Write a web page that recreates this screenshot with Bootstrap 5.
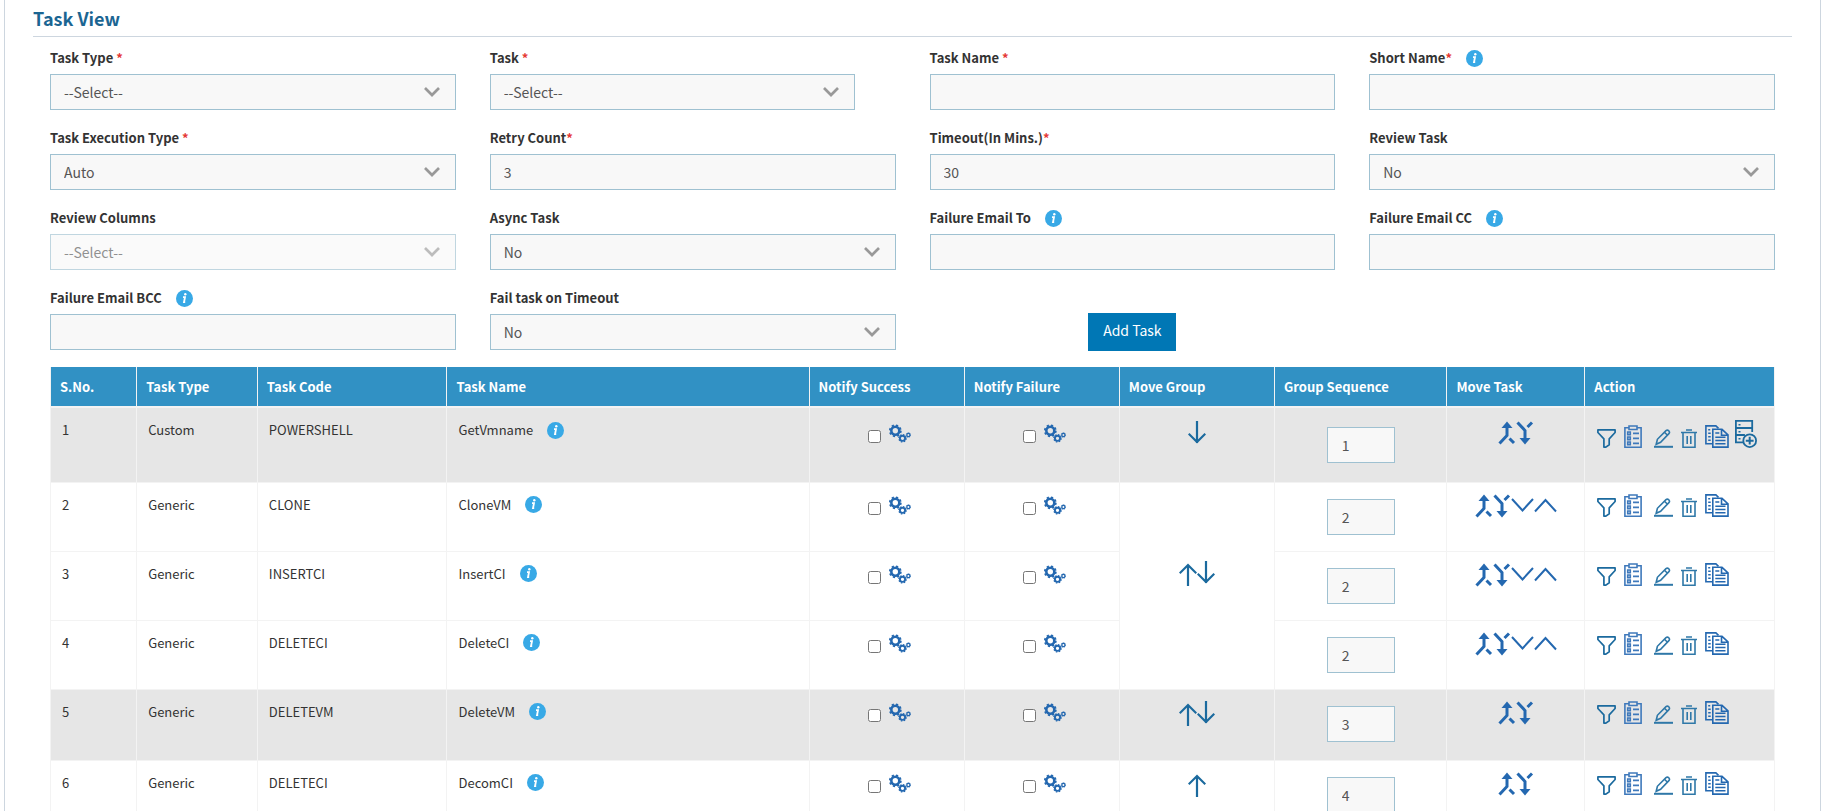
<!DOCTYPE html>
<html lang="en">
<head>
<meta charset="utf-8">
<meta name="viewport" content="width=device-width, initial-scale=1">
<title>Task View</title>
<link href="https://cdn.jsdelivr.net/npm/bootstrap@5.3.0/dist/css/bootstrap.min.css" rel="stylesheet">
<style>
  body { font-family: "Noto Sans CJK SC", "Open Sans", sans-serif; font-size: 13px; line-height: 20px; color: #333; background: #fff; }
  .panel { margin: 0 3px 0 4px; padding: 0 28px; border: solid #cdd6df; border-width: 0 1px; }
  .panel-title { font-size: 18px; line-height: 36px; font-weight: 700; color: #1b6592; border-bottom: 1px solid #cdd6df; }
  .task-form { padding-top: 11px; row-gap: 18px; }
  .field { padding: 0 17px; }
  .field-label { display: flex; align-items: center; height: 20px; margin-bottom: 6px; font-weight: 700; white-space: pre; }
  .req { color: #e53935; }
  .field .form-control, .field .form-select, .seq-input { height: 36px; padding: 0 13px; font-size: 14px; line-height: 34px; color: #555; background-color: #f8f8f8; border: 1px solid #9fc1d1; border-radius: 0; }
  .field .form-select { background-image: url("data:image/svg+xml,%3Csvg xmlns='http://www.w3.org/2000/svg' viewBox='0 0 16 10'%3E%3Cpath fill='none' stroke='%23999' stroke-width='2.700' d='M1 1l7 7 7-7'/%3E%3C/svg%3E"); background-size: 16px 10px; background-position: right 15px center; }
  .field .form-select:disabled { opacity: .65; }
  .short-select { width: 90%; }
  .btn-add { width: 88px; height: 38px; margin-top: 25px; padding: 0 0 3px; font-size: 14px; color: #fff; background: #0077b5; border-radius: 0; }
  .btn-add:hover { color: #fff; background: #00669c; }
  .info-dot { width: 17px; height: 17px; margin-left: 14px; flex: none; }
  .table-wrap { padding: 0 17px; margin-top: 16px; }
  .task-table { table-layout: fixed; width: 100%; margin: 0; border-left: 1px solid #f3f3f3; color: #333; }
  .task-table th { height: 40px; padding: 8px 9px; font-size: 13px; font-weight: 700; color: #fff; background: #3191c4; border: solid #f3f3f3; border-width: 0 1px 2px 0; vertical-align: middle; }
  .task-table td { height: 69px; padding: 12px 11px 0; background: #fff; border: solid #f3f3f3; border-width: 0 1px 1px 0; vertical-align: top; }
  .task-table .shaded td { background: #e6e6e6; }
  .task-table .first td { height: 75px; }
  .task-table .last-group td { height: 71px; }
  .task-table .notify { padding: 13px 0 0 58px; }
  .task-table .seq { padding: 16px 0 0; text-align: center; }
  .task-table .moves { padding: 11px 0 0; text-align: center; }
  .task-table .group-span { padding: 0 0 24px; vertical-align: middle; }
  .task-table .acts { padding: 6px 0 0 12px; }
  .task-table .first .notify { padding-top: 16px; }
  .task-table .first .seq { padding-top: 19px; }
  .task-table .first .moves { padding-top: 13px; }
  .task-table .first .acts { padding-top: 12px; }
  .seq-input { width: 68px; padding: 0 14px; }
  .notify input { width: 13px; height: 13px; margin: 6px 8px 0 0; }
  .ib { display: inline-flex; padding: 0; border: 0; background: none; }
  .acts > div { align-items: flex-end; height: 28px; gap: 8px; }
  .acts .server { margin-left: -2px; }
  .acts .pencil { margin-left: 4px; }
</style>
</head>
<body class="vh-100 overflow-hidden">
<svg class="d-none" aria-hidden="true">
  <symbol id="info" viewBox="0 0 17 17"><circle cx="8.500" cy="8.500" r="8.500" fill="#38a9e6"/><path d="M7 7.200h2l-1 5h1.200" fill="none" stroke="#fff" stroke-width="1.800"/><circle cx="9.300" cy="4.300" r="1.200" fill="#fff"/></symbol>
  <symbol id="gears" viewBox="0 0 22 19"><g fill="none" stroke="#2468b0">
    <circle cx="6.300" cy="6.800" r="4" stroke-width="2.600"/><circle cx="6.300" cy="6.800" r="5.500" stroke-width="1.800" stroke-dasharray="2.200 2.120"/>
    <circle cx="13.500" cy="14.300" r="2.600" stroke-width="1.900"/><circle cx="13.500" cy="14.300" r="3.700" stroke-width="1.200" stroke-dasharray="1.500 1.406"/>
    <circle cx="19.400" cy="11" r="1.600" stroke-width="1.300"/><circle cx="19.400" cy="11" r="2.300" stroke-width=".8" stroke-dasharray="1 .806"/></g></symbol>
  <symbol id="down" viewBox="0 0 18 25"><path d="M9 0v22M.7 12.700L9 21l8.300-8.300" fill="none" stroke="#1b6a9e" stroke-width="2.200"/></symbol>
  <symbol id="up" viewBox="0 0 18 25"><path d="M9 25V4M.7 12.300L9 4l8.300 8.300" fill="none" stroke="#1b6a9e" stroke-width="2.200"/></symbol>
  <symbol id="join" viewBox="0 0 18 24"><g fill="none" stroke="#2468b0" stroke-width="3"><path d="M9 5v9.500l-7.500 8M11.500 17.500l4.500 4.500"/></g><path d="M9 .5l5.500 6.500h-11z" fill="#2468b0"/></symbol>
  <symbol id="split" viewBox="0 0 18 24"><g fill="none" stroke="#2468b0" stroke-width="3"><path d="M9 19V9.500L1.500 1.500M11.500 6l4.500-4.500"/></g><path d="M9 23.500l5.500-6.500h-11z" fill="#2468b0"/></symbol>
  <symbol id="chev-d" viewBox="0 0 23 24"><path d="M1 5l10.500 11.500L22 5" fill="none" stroke="#2468b0" stroke-width="2"/></symbol>
  <symbol id="chev-u" viewBox="0 0 23 24"><path d="M1 17.500L11.500 6 22 17.500" fill="none" stroke="#2468b0" stroke-width="2"/></symbol>
  <symbol id="funnel" viewBox="0 0 19 19"><path d="M.9.9h17.200v2.600l-5.900 6.300v6L8.900 18.100h-2V9.800L.9 3.500z" fill="none" stroke="#1b6a9e" stroke-width="1.700" stroke-linejoin="round"/></symbol>
  <symbol id="clip" viewBox="0 0 18 23"><g fill="none" stroke="#3f79bb" stroke-width="1.600"><path d="M5 2.700H.9v19.500h16.200V2.700H13M5 1h8v3.500H5zM3.700 7h2.600v2.600H3.700zM3.700 12h2.600v2.600H3.700zM3.700 17h2.600v2.600H3.700z"/><path d="M9 8.300h6M9 13.300h6M9 18.300h6" stroke-width="1.800"/></g></symbol>
  <symbol id="pencil" viewBox="0 0 19 19"><g fill="none" stroke="#2f78a8" stroke-width="1.600"><path d="M2.200 15.300l1.200-5L12 1.700q1.300-1.200 2.600 0l.3.300q1.200 1.300 0 2.600l-8.300 8.700zM10.500 3.200l3 3"/><path d="M0 17.800h19" stroke-width="2"/></g></symbol>
  <symbol id="trash" viewBox="0 0 16 19"><g fill="none" stroke="#2f78a8" stroke-width="1.600"><path d="M0 3.500h16M5 1h6M2 3.500v14.700h12V3.500M6.200 7v8M9.800 7v8"/></g></symbol>
  <symbol id="copy" viewBox="0 0 24 23"><g fill="none" stroke="#2468b0" stroke-width="1.600"><path d="M7 18.700H.9V.9h10l2.600 2.400M3.200 4.800h2M3.200 8.300h2.500M3.200 11.800h2.500M3.200 15.300h2.500"/><path d="M7.800 4.300h9.200l6 5.500v12.300H7.800zM16.500 4.300v6H23M10.300 8h4M10.300 12.300h10.200M10.300 15.500h10.200M10.300 18.700h10.200"/></g></symbol>
  <symbol id="server" viewBox="0 0 22 28"><g fill="none" stroke="#1b6a9e" stroke-width="1.800"><path d="M17.200 12V.9H.9v21.400H8M.9 8h16.300M.9 15h9"/><circle cx="14.700" cy="20.700" r="6.400"/><path d="M14.700 16.800v7.800M10.800 20.700h7.800" stroke-width="2"/></g><path d="M3.500 4h2v1.400h-2zM3.500 11h2v1.400h-2zM3.500 18h2v1.400h-2z" fill="#1b6a9e"/></symbol>
</svg>

<main class="panel">
  <h1 class="panel-title mb-0">Task View</h1>

  <form class="task-form row gx-0">
    <div class="field col-3"><label class="field-label" for="taskType">Task Type <span class="req">*</span></label>
      <select class="form-select" id="taskType"><option>--Select--</option></select></div>
    <div class="field col-3"><label class="field-label" for="task">Task <span class="req">*</span></label>
      <select class="form-select short-select" id="task"><option>--Select--</option></select></div>
    <div class="field col-3"><label class="field-label" for="taskName">Task Name <span class="req">*</span></label>
      <input class="form-control" id="taskName" type="text"></div>
    <div class="field col-3"><label class="field-label" for="shortName">Short Name<span class="req">*</span><svg class="info-dot"><use href="#info"/></svg></label>
      <input class="form-control" id="shortName" type="text"></div>

    <div class="field col-3"><label class="field-label" for="execType">Task Execution Type <span class="req">*</span></label>
      <select class="form-select" id="execType"><option>Auto</option></select></div>
    <div class="field col-3"><label class="field-label" for="retry">Retry Count<span class="req">*</span></label>
      <input class="form-control" id="retry" type="text" value="3"></div>
    <div class="field col-3"><label class="field-label" for="timeout">Timeout(In Mins.)<span class="req">*</span></label>
      <input class="form-control" id="timeout" type="text" value="30"></div>
    <div class="field col-3"><label class="field-label" for="review">Review Task</label>
      <select class="form-select" id="review"><option>No</option></select></div>

    <div class="field col-3"><label class="field-label" for="reviewCols">Review Columns</label>
      <select class="form-select" id="reviewCols" disabled><option>--Select--</option></select></div>
    <div class="field col-3"><label class="field-label" for="async">Async Task</label>
      <select class="form-select" id="async"><option>No</option></select></div>
    <div class="field col-3"><label class="field-label" for="mailTo">Failure Email To<svg class="info-dot"><use href="#info"/></svg></label>
      <input class="form-control" id="mailTo" type="text"></div>
    <div class="field col-3"><label class="field-label" for="mailCc">Failure Email CC<svg class="info-dot"><use href="#info"/></svg></label>
      <input class="form-control" id="mailCc" type="text"></div>

    <div class="field col-3"><label class="field-label" for="mailBcc">Failure Email BCC<svg class="info-dot"><use href="#info"/></svg></label>
      <input class="form-control" id="mailBcc" type="text"></div>
    <div class="field col-3"><label class="field-label" for="failOn">Fail task on Timeout</label>
      <select class="form-select" id="failOn"><option>No</option></select></div>
    <div class="field col-3 text-center"><button class="btn btn-add" type="button">Add Task</button></div>
  </form>

  <div class="table-wrap">
    <table class="table task-table">
      <colgroup><col style="width:5%"><col style="width:7%"><col style="width:11%"><col style="width:21%"><col style="width:9%"><col style="width:9%"><col style="width:9%"><col style="width:10%"><col style="width:8%"><col style="width:11%"></colgroup>
      <thead><tr><th>S.No.</th><th>Task Type</th><th>Task Code</th><th>Task Name</th><th>Notify Success</th><th>Notify Failure</th><th>Move Group</th><th>Group Sequence</th><th>Move Task</th><th>Action</th></tr></thead>
      <tbody>
        <tr class="shaded first">
          <td>1</td><td>Custom</td><td>POWERSHELL</td>
          <td><div class="d-flex align-items-center">GetVmname<svg class="info-dot"><use href="#info"/></svg></div></td>
          <td class="notify"><div class="d-flex"><input type="checkbox" aria-label="Notify success 1"><button class="ib" aria-label="Success settings"><svg width="22" height="19"><use href="#gears"/></svg></button></div></td>
          <td class="notify"><div class="d-flex"><input type="checkbox" aria-label="Notify failure 1"><button class="ib" aria-label="Failure settings"><svg width="22" height="19"><use href="#gears"/></svg></button></div></td>
          <td class="moves"><div class="d-flex justify-content-center"><button class="ib" aria-label="Move group down"><svg width="18" height="25"><use href="#down"/></svg></button></div></td>
          <td class="seq"><input class="seq-input" type="text" value="1" aria-label="Group sequence 1"></td>
          <td class="moves"><div class="d-flex justify-content-center"><button class="ib" aria-label="Join above"><svg width="18" height="24"><use href="#join"/></svg></button><button class="ib" aria-label="Split below"><svg width="18" height="24"><use href="#split"/></svg></button></div></td>
          <td class="acts"><div class="d-flex"><button class="ib" aria-label="Filter"><svg width="19" height="19"><use href="#funnel"/></svg></button><button class="ib" aria-label="Checklist"><svg width="18" height="23"><use href="#clip"/></svg></button><button class="ib pencil" aria-label="Edit"><svg width="19" height="19"><use href="#pencil"/></svg></button><button class="ib" aria-label="Delete"><svg width="16" height="19"><use href="#trash"/></svg></button><button class="ib" aria-label="Copy"><svg width="24" height="23"><use href="#copy"/></svg></button><button class="ib server" aria-label="Add server"><svg width="22" height="28"><use href="#server"/></svg></button></div></td>
        </tr>
        <tr>
          <td>2</td><td>Generic</td><td>CLONE</td>
          <td><div class="d-flex align-items-center">CloneVM<svg class="info-dot"><use href="#info"/></svg></div></td>
          <td class="notify"><div class="d-flex"><input type="checkbox" aria-label="Notify success 2"><button class="ib" aria-label="Success settings"><svg width="22" height="19"><use href="#gears"/></svg></button></div></td>
          <td class="notify"><div class="d-flex"><input type="checkbox" aria-label="Notify failure 2"><button class="ib" aria-label="Failure settings"><svg width="22" height="19"><use href="#gears"/></svg></button></div></td>
          <td class="group-span" rowspan="3"><div class="d-flex justify-content-center"><button class="ib" aria-label="Move group up"><svg width="18" height="25"><use href="#up"/></svg></button><button class="ib" aria-label="Move group down"><svg width="18" height="25"><use href="#down"/></svg></button></div></td>
          <td class="seq"><input class="seq-input" type="text" value="2" aria-label="Group sequence 2"></td>
          <td class="moves"><div class="d-flex justify-content-center"><button class="ib" aria-label="Join above"><svg width="18" height="24"><use href="#join"/></svg></button><button class="ib" aria-label="Split below"><svg width="18" height="24"><use href="#split"/></svg></button><button class="ib" aria-label="Move down"><svg width="23" height="24"><use href="#chev-d"/></svg></button><button class="ib" aria-label="Move up"><svg width="23" height="24"><use href="#chev-u"/></svg></button></div></td>
          <td class="acts"><div class="d-flex"><button class="ib" aria-label="Filter"><svg width="19" height="19"><use href="#funnel"/></svg></button><button class="ib" aria-label="Checklist"><svg width="18" height="23"><use href="#clip"/></svg></button><button class="ib pencil" aria-label="Edit"><svg width="19" height="19"><use href="#pencil"/></svg></button><button class="ib" aria-label="Delete"><svg width="16" height="19"><use href="#trash"/></svg></button><button class="ib" aria-label="Copy"><svg width="24" height="23"><use href="#copy"/></svg></button></div></td>
        </tr>
        <tr>
          <td>3</td><td>Generic</td><td>INSERTCI</td>
          <td><div class="d-flex align-items-center">InsertCI<svg class="info-dot"><use href="#info"/></svg></div></td>
          <td class="notify"><div class="d-flex"><input type="checkbox" aria-label="Notify success 3"><button class="ib" aria-label="Success settings"><svg width="22" height="19"><use href="#gears"/></svg></button></div></td>
          <td class="notify"><div class="d-flex"><input type="checkbox" aria-label="Notify failure 3"><button class="ib" aria-label="Failure settings"><svg width="22" height="19"><use href="#gears"/></svg></button></div></td>
          <td class="seq"><input class="seq-input" type="text" value="2" aria-label="Group sequence 3"></td>
          <td class="moves"><div class="d-flex justify-content-center"><button class="ib" aria-label="Join above"><svg width="18" height="24"><use href="#join"/></svg></button><button class="ib" aria-label="Split below"><svg width="18" height="24"><use href="#split"/></svg></button><button class="ib" aria-label="Move down"><svg width="23" height="24"><use href="#chev-d"/></svg></button><button class="ib" aria-label="Move up"><svg width="23" height="24"><use href="#chev-u"/></svg></button></div></td>
          <td class="acts"><div class="d-flex"><button class="ib" aria-label="Filter"><svg width="19" height="19"><use href="#funnel"/></svg></button><button class="ib" aria-label="Checklist"><svg width="18" height="23"><use href="#clip"/></svg></button><button class="ib pencil" aria-label="Edit"><svg width="19" height="19"><use href="#pencil"/></svg></button><button class="ib" aria-label="Delete"><svg width="16" height="19"><use href="#trash"/></svg></button><button class="ib" aria-label="Copy"><svg width="24" height="23"><use href="#copy"/></svg></button></div></td>
        </tr>
        <tr>
          <td>4</td><td>Generic</td><td>DELETECI</td>
          <td><div class="d-flex align-items-center">DeleteCI<svg class="info-dot"><use href="#info"/></svg></div></td>
          <td class="notify"><div class="d-flex"><input type="checkbox" aria-label="Notify success 4"><button class="ib" aria-label="Success settings"><svg width="22" height="19"><use href="#gears"/></svg></button></div></td>
          <td class="notify"><div class="d-flex"><input type="checkbox" aria-label="Notify failure 4"><button class="ib" aria-label="Failure settings"><svg width="22" height="19"><use href="#gears"/></svg></button></div></td>
          <td class="seq"><input class="seq-input" type="text" value="2" aria-label="Group sequence 4"></td>
          <td class="moves"><div class="d-flex justify-content-center"><button class="ib" aria-label="Join above"><svg width="18" height="24"><use href="#join"/></svg></button><button class="ib" aria-label="Split below"><svg width="18" height="24"><use href="#split"/></svg></button><button class="ib" aria-label="Move down"><svg width="23" height="24"><use href="#chev-d"/></svg></button><button class="ib" aria-label="Move up"><svg width="23" height="24"><use href="#chev-u"/></svg></button></div></td>
          <td class="acts"><div class="d-flex"><button class="ib" aria-label="Filter"><svg width="19" height="19"><use href="#funnel"/></svg></button><button class="ib" aria-label="Checklist"><svg width="18" height="23"><use href="#clip"/></svg></button><button class="ib pencil" aria-label="Edit"><svg width="19" height="19"><use href="#pencil"/></svg></button><button class="ib" aria-label="Delete"><svg width="16" height="19"><use href="#trash"/></svg></button><button class="ib" aria-label="Copy"><svg width="24" height="23"><use href="#copy"/></svg></button></div></td>
        </tr>
        <tr class="shaded last-group">
          <td>5</td><td>Generic</td><td>DELETEVM</td>
          <td><div class="d-flex align-items-center">DeleteVM<svg class="info-dot"><use href="#info"/></svg></div></td>
          <td class="notify"><div class="d-flex"><input type="checkbox" aria-label="Notify success 5"><button class="ib" aria-label="Success settings"><svg width="22" height="19"><use href="#gears"/></svg></button></div></td>
          <td class="notify"><div class="d-flex"><input type="checkbox" aria-label="Notify failure 5"><button class="ib" aria-label="Failure settings"><svg width="22" height="19"><use href="#gears"/></svg></button></div></td>
          <td class="moves"><div class="d-flex justify-content-center"><button class="ib" aria-label="Move group up"><svg width="18" height="25"><use href="#up"/></svg></button><button class="ib" aria-label="Move group down"><svg width="18" height="25"><use href="#down"/></svg></button></div></td>
          <td class="seq"><input class="seq-input" type="text" value="3" aria-label="Group sequence 5"></td>
          <td class="moves"><div class="d-flex justify-content-center"><button class="ib" aria-label="Join above"><svg width="18" height="24"><use href="#join"/></svg></button><button class="ib" aria-label="Split below"><svg width="18" height="24"><use href="#split"/></svg></button></div></td>
          <td class="acts"><div class="d-flex"><button class="ib" aria-label="Filter"><svg width="19" height="19"><use href="#funnel"/></svg></button><button class="ib" aria-label="Checklist"><svg width="18" height="23"><use href="#clip"/></svg></button><button class="ib pencil" aria-label="Edit"><svg width="19" height="19"><use href="#pencil"/></svg></button><button class="ib" aria-label="Delete"><svg width="16" height="19"><use href="#trash"/></svg></button><button class="ib" aria-label="Copy"><svg width="24" height="23"><use href="#copy"/></svg></button></div></td>
        </tr>
        <tr>
          <td>6</td><td>Generic</td><td>DELETECI</td>
          <td><div class="d-flex align-items-center">DecomCI<svg class="info-dot"><use href="#info"/></svg></div></td>
          <td class="notify"><div class="d-flex"><input type="checkbox" aria-label="Notify success 6"><button class="ib" aria-label="Success settings"><svg width="22" height="19"><use href="#gears"/></svg></button></div></td>
          <td class="notify"><div class="d-flex"><input type="checkbox" aria-label="Notify failure 6"><button class="ib" aria-label="Failure settings"><svg width="22" height="19"><use href="#gears"/></svg></button></div></td>
          <td class="moves"><div class="d-flex justify-content-center"><button class="ib" aria-label="Move group up"><svg width="18" height="25"><use href="#up"/></svg></button></div></td>
          <td class="seq"><input class="seq-input" type="text" value="4" aria-label="Group sequence 6"></td>
          <td class="moves"><div class="d-flex justify-content-center"><button class="ib" aria-label="Join above"><svg width="18" height="24"><use href="#join"/></svg></button><button class="ib" aria-label="Split below"><svg width="18" height="24"><use href="#split"/></svg></button></div></td>
          <td class="acts"><div class="d-flex"><button class="ib" aria-label="Filter"><svg width="19" height="19"><use href="#funnel"/></svg></button><button class="ib" aria-label="Checklist"><svg width="18" height="23"><use href="#clip"/></svg></button><button class="ib pencil" aria-label="Edit"><svg width="19" height="19"><use href="#pencil"/></svg></button><button class="ib" aria-label="Delete"><svg width="16" height="19"><use href="#trash"/></svg></button><button class="ib" aria-label="Copy"><svg width="24" height="23"><use href="#copy"/></svg></button></div></td>
        </tr>
      </tbody>
    </table>
  </div>
</main>
<script src="https://cdn.jsdelivr.net/npm/bootstrap@5.3.0/dist/js/bootstrap.bundle.min.js"></script>
</body>
</html>
